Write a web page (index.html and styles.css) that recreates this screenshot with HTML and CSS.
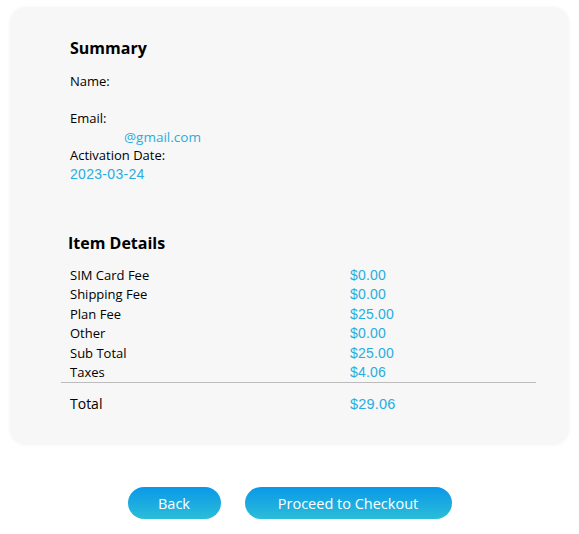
FILE: index.html
```html
<!DOCTYPE html>
<html lang="en">
<head>
<meta charset="utf-8">
<title>Summary</title>
<link rel="stylesheet" href="styles.css">
</head>
<body>
<div class="page">
  <section class="card">
    <div class="summary">
      <h2 class="title">Summary</h2>
      <div class="field">
        <div class="label">Name:</div>
        <div class="value empty"></div>
      </div>
      <div class="field">
        <div class="label">Email:</div>
        <div class="value email">@gmail.com</div>
      </div>
      <div class="field">
        <div class="label">Activation Date:</div>
        <div class="value">2023-03-24</div>
      </div>
    </div>
    <div class="items">
      <h2 class="title items-title">Item Details</h2>
      <div class="rows">
        <div class="row"><span class="label">SIM Card Fee</span><span class="value">$0.00</span></div>
        <div class="row"><span class="label">Shipping Fee</span><span class="value">$0.00</span></div>
        <div class="row"><span class="label">Plan Fee</span><span class="value">$25.00</span></div>
        <div class="row"><span class="label">Other</span><span class="value">$0.00</span></div>
        <div class="row"><span class="label">Sub Total</span><span class="value">$25.00</span></div>
        <div class="row"><span class="label">Taxes</span><span class="value">$4.06</span></div>
      </div>
      <div class="row total"><span class="label">Total</span><span class="value">$29.06</span></div>
    </div>
  </section>
  <div class="actions">
    <button class="btn btn-back">Back</button>
    <button class="btn btn-proceed">Proceed to Checkout</button>
  </div>
</div>
</body>
</html>
```
FILE: styles.css
```css
html, body {
  margin: 0;
  padding: 0;
  background: #ffffff;
}
body {
  font-family: "Open Sans", "Noto Sans", sans-serif;
  color: #000000;
}
.page {
  padding: 7px 10px 0;
}
.card {
  background: #f7f7f7;
  border-radius: 16px;
  box-shadow: 0 0 4px rgba(0, 0, 0, 0.04);
  padding: 31px 33px 31px 51px;
}
.title {
  margin: 0;
  font-size: 16px;
  line-height: 20px;
  font-weight: 700;
  color: #000;
}
.summary {
  padding-left: 9px;
}
.summary .title {
  margin-bottom: 14px;
}
.field .label {
  font-size: 13px;
  line-height: 18.5px;
  font-weight: 500;
}
.field .value {
  font-family: "Liberation Sans", Arial, sans-serif;
  font-size: 14px;
  line-height: 18.5px;
  letter-spacing: 0.3px;
  color: #27aee0;
  min-height: 18.5px;
}
.field .value.email {
  padding-left: 54px;
  font-family: "Open Sans", sans-serif;
  letter-spacing: 0;
  font-size: 13.5px;
}
.items {
  margin-top: 50px;
}
.items-title {
  padding-left: 7px;
  margin-bottom: 12px;
}
.rows {
  padding-top: 1px;
  border-bottom: 1px solid #bcbcbc;
}
.row {
  display: grid;
  grid-template-columns: 280px 1fr;
  padding-left: 9px;
  line-height: 19.4px;
}
.row .label {
  font-size: 13px;
  font-weight: 500;
}
.row .value {
  font-family: "Liberation Sans", Arial, sans-serif;
  font-size: 14px;
  letter-spacing: 0.2px;
  color: #27aee0;
}
.row.total {
  margin-top: 11px;
  line-height: 20px;
}
.row.total .label {
  font-size: 14px;
}
.row.total .value {
  font-size: 14.5px;
}
.actions {
  display: flex;
  justify-content: center;
  gap: 24px;
  margin-top: 42px;
}
.btn {
  height: 32px;
  border: none;
  border-radius: 16px;
  background: linear-gradient(180deg, #0a98e8 0%, #2bbdd8 100%);
  color: #ffffff;
  font-family: "Open Sans", sans-serif;
  font-size: 14.5px;
  font-weight: 400;
  padding: 0;
}
.btn-back {
  width: 93px;
}
.btn-proceed {
  width: 207px;
}
```
